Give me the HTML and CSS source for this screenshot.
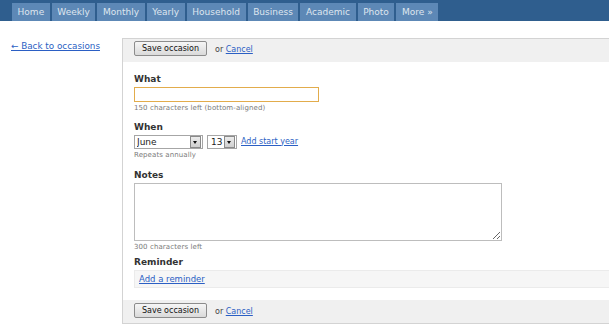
FILE: index.html
```html
<!DOCTYPE html>
<html lang="en">
<head>
  <meta charset="UTF-8">
  <title>Edit occasion</title>
  <link rel="stylesheet" href="styles.css">
</head>
<body>
  <div class="nav">
    <a class="tab" href="#">Home</a>
    <a class="tab" href="#">Weekly</a>
    <a class="tab" href="#">Monthly</a>
    <a class="tab" href="#">Yearly</a>
    <a class="tab" href="#">Household</a>
    <a class="tab" href="#">Business</a>
    <a class="tab" href="#">Academic</a>
    <a class="tab" href="#">Photo</a>
    <a class="tab" href="#">More &raquo;</a>
  </div>

  <div class="main">
    <div class="sidebar">
      <a href="#">&larr; Back to occasions</a>
    </div>

    <div class="panel">
      <div class="actions">
        <button class="btn">Save occasion</button>
        <span class="or">or <a href="#">Cancel</a></span>
      </div>

      <div class="fields">
        <div class="field">
          <label class="label">What</label>
          <input class="text-input" type="text">
          <div class="hint">150 characters left (bottom-aligned)</div>
        </div>

        <div class="field">
          <label class="label">When</label>
          <div class="date-row">
            <span class="select month">
              <select><option>June</option></select>
              <span class="select-btn"></span>
            </span>
            <span class="select day">
              <select><option>13</option></select>
              <span class="select-btn"></span>
            </span>
            <a href="#" class="start-year">Add start year</a>
          </div>
          <div class="hint">Repeats annually</div>
        </div>

        <div class="field">
          <label class="label">Notes</label>
          <textarea class="notes"></textarea>
          <div class="hint">300 characters left</div>
        </div>

        <div class="field reminder-field">
          <label class="label">Reminder</label>
          <div class="reminder"><a href="#">Add a reminder</a></div>
        </div>
      </div>

      <div class="actions bottom">
        <button class="btn">Save occasion</button>
        <span class="or">or <a href="#">Cancel</a></span>
      </div>
    </div>
  </div>
</body>
</html>
```

FILE: styles.css
```css
body {
  margin: 0;
  font-family: "DejaVu Sans", Verdana, sans-serif;
  font-size: 9px;
  color: #333;
  background: #fff;
  overflow: hidden;
}

a {
  color: #2b5fc4;
  font-size: 8px;
}

.nav {
  display: flex;
  align-items: flex-end;
  gap: 2px;
  height: 21px;
  padding-left: 12px;
  background: #2f5e8e;
}

.nav .tab {
  height: 18px;
  line-height: 18px;
  padding: 0 5.6px;
  background: #5d88b6;
  color: #dfe6ef;
  text-decoration: none;
  font-size: 9px;
}

.main {
  display: flex;
  padding: 17px 0 0 11px;
}

.sidebar {
  width: 111px;
  flex-shrink: 0;
  padding-top: 3px;
  line-height: 11px;
}

.sidebar a {
  font-size: 8.8px;
}

.panel {
  flex: 1;
  border: 1px solid #d3d3d3;
  border-right: none;
  margin-right: -20px;
}

.actions {
  display: flex;
  align-items: flex-start;
  height: 23px;
  padding: 2px 11px 0;
  box-sizing: border-box;
  background: #f0f0f0;
}

.actions.bottom {
  height: 23px;
  padding-top: 3px;
}

.btn {
  width: 73px;
  height: 15px;
  padding: 0;
  font-family: "DejaVu Sans", Verdana, sans-serif;
  font-size: 8px;
  color: #111;
  border: 1px solid #8c8c8c;
  border-radius: 2px;
  background: linear-gradient(#f6f6f6, #dadada);
}

.or {
  margin-left: 8px;
  padding-top: 4px;
  font-size: 8px;
  color: #444;
}

.fields {
  padding: 12px 0 12px 11px;
}

.field {
  margin-bottom: 9px;
}

.field:last-child {
  margin-bottom: 0;
}

.label {
  display: block;
  font-weight: bold;
  line-height: 11px;
  margin-bottom: 2px;
  color: #333;
}

.text-input {
  display: block;
  width: 185px;
  height: 15px;
  box-sizing: border-box;
  border: 1px solid #e2ac4c;
  outline: none;
  padding: 0 2px;
}

.hint {
  font-size: 7px;
  line-height: 10px;
  margin-top: 1px;
  color: #7a7a7a;
  letter-spacing: 0.1px;
}

.date-row {
  display: flex;
  align-items: center;
  gap: 4px;
  height: 14px;
}

.select {
  display: flex;
  align-items: center;
  height: 14px;
  box-sizing: border-box;
  border: 1px solid #a6a6a6;
  background: #fff;
}

.select select {
  appearance: none;
  -webkit-appearance: none;
  border: none;
  outline: none;
  background: transparent;
  font-family: "DejaVu Sans", Verdana, sans-serif;
  font-size: 9px;
  color: #222;
  padding: 0 0 0 2px;
  height: 12px;
  flex: 1;
}

.month {
  width: 69px;
}

.day {
  width: 30px;
}

.day select {
  padding-left: 3px;
}

.select-btn {
  position: relative;
  width: 9px;
  height: 10px;
  margin-right: 1px;
  border: 1px solid #8a8a8a;
  background: linear-gradient(#ececec, #cfcfcf);
}

.select-btn::after {
  content: "";
  position: absolute;
  left: 2px;
  top: 4px;
  border-left: 2.5px solid transparent;
  border-right: 2.5px solid transparent;
  border-top: 3px solid #111;
}

.start-year {
  margin-top: -2px;
}

.notes {
  display: block;
  width: 368px;
  height: 58px;
  box-sizing: border-box;
  border: 1px solid #bdbdbd;
  margin: 0;
}

.field:nth-child(3) {
  margin-bottom: 5px;
}

.field:nth-child(2) {
  margin-bottom: 10px;
}

.reminder {
  height: 18px;
  line-height: 17px;
  box-sizing: border-box;
  padding-left: 4px;
  border: 1px solid #ebebeb;
  border-right: none;
  background: #f6f6f6;
}

.reminder a {
  font-size: 8.5px;
}
```
